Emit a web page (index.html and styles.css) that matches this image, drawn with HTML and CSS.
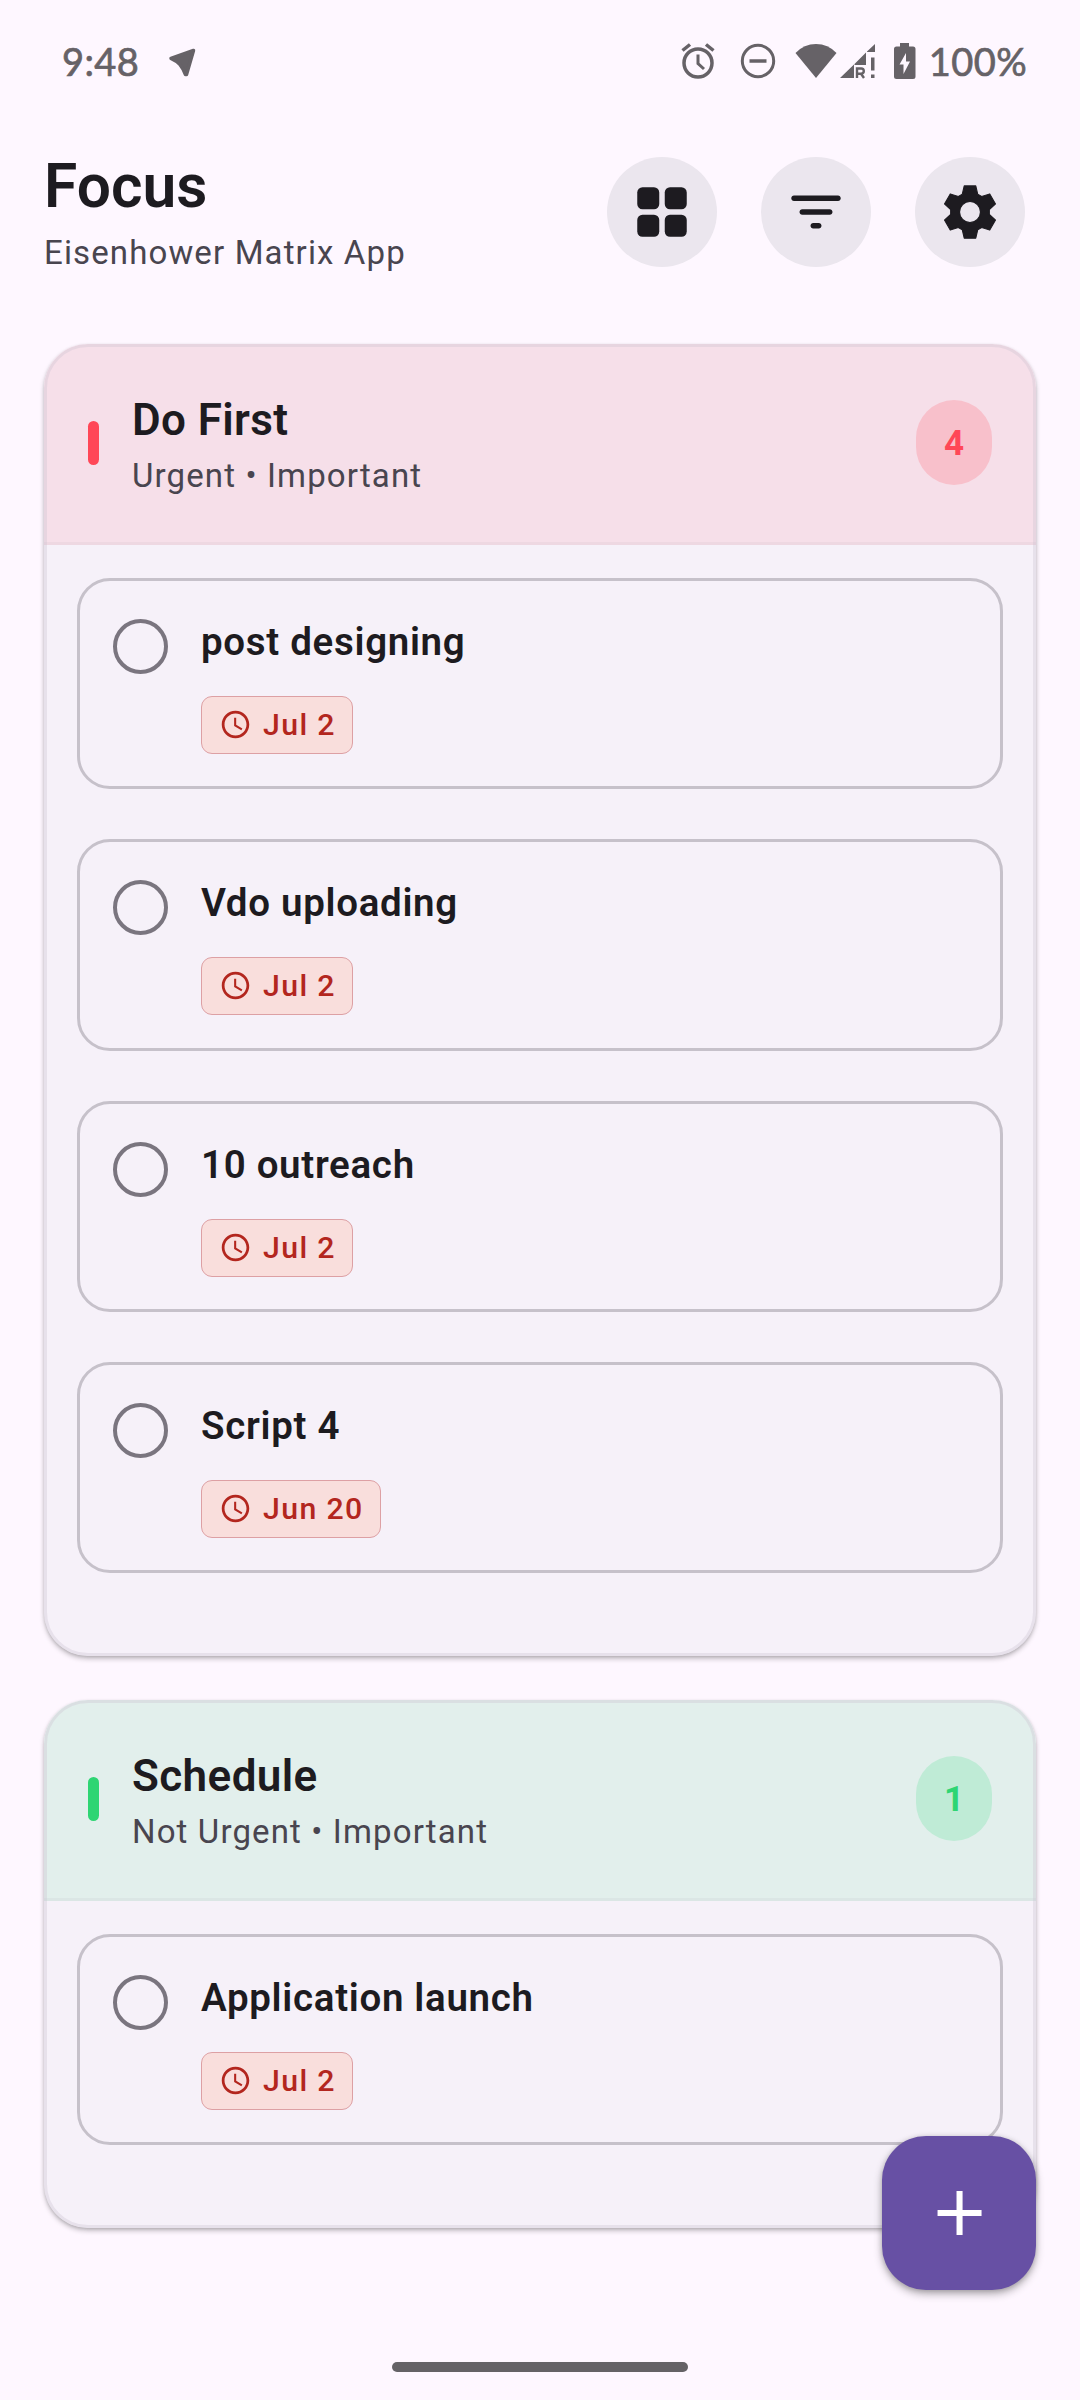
FILE: index.html
```html
<!DOCTYPE html>
<html lang="en">
<head>
<meta charset="utf-8">
<title>Focus</title>
<link rel="stylesheet" href="styles.css">
</head>
<body>
<svg class="defs" aria-hidden="true">
  <symbol id="clock" viewBox="0 0 24 24"><path d="M11.99 2C6.47 2 2 6.48 2 12s4.47 10 9.99 10C17.52 22 22 17.52 22 12S17.52 2 11.99 2zM12 20c-4.42 0-8-3.58-8-8s3.58-8 8-8 8 3.58 8 8-3.58 8-8 8zm.5-13H11v6l5.25 3.15.75-1.23-4.5-2.67z"/></symbol>
</svg>
<div class="screen">
  <div class="status">
    <span class="time">9:48</span>
    <svg class="send" viewBox="0 0 28 29"><path d="M25.500 2.500 L3 10.500 Q8.500 13 12 16.500 Q15 20 17.500 26.500 L18.500 26.500 Z" stroke="currentColor" stroke-width="3.500" stroke-linejoin="round"/></svg>
    <svg class="alarm outline" viewBox="0 0 34 36"><circle cx="17" cy="20" r="14" stroke-width="3.500"/><path d="M1.500 7.500 9 1.500M32.500 7.500 25 1.500" stroke-width="3.500"/><path d="M17 11.500V20.500L23 26" stroke-width="3"/></svg>
    <svg class="dnd outline" viewBox="0 0 36 36"><circle cx="18" cy="18" r="15.700" stroke-width="3"/><path d="M9.500 18H26.500" stroke-width="3.500"/></svg>
    <svg class="wifi" viewBox="0 0 42 36"><path d="M21 35 .5 10Q9 1 21 1T41.500 10Z"/></svg>
    <svg class="signal" viewBox="0 0 36 36"><path d="M0 35 14 21.500V35ZM14.500 21 26 9.500V22H14.500ZM27 8.500 35 1V9H27ZM31 14.500h3.500V27.500H31ZM31 31.500h3.500V35H31Z"/><path class="outline" d="M17 35V25.500h4.200a2.600 2.600 0 0 1 0 5.200H17m4 0 3 4.300" stroke-width="2.400"/></svg>
    <svg class="battery" viewBox="0 0 22 36"><path fill-rule="evenodd" d="M6 0h9v3.500h4Q21.500 3.500 21.500 6V33.500Q21.500 36 19 36H2.500Q0 36 0 33.500V6Q0 3.500 2.500 3.500H6ZM12 10 5.500 21.500H9.500V31L16 18.500H12Z"/></svg>
    <span class="pct">100%</span>
  </div>

  <header class="appbar">
    <div class="heading">
      <h1>Focus</h1>
      <p>Eisenhower Matrix App</p>
    </div>
    <div class="actions">
      <button class="round"><svg viewBox="0 0 24 24"><rect x="3" y="3" width="8" height="8" rx="1.900"/><rect x="13" y="3" width="8" height="8" rx="1.900"/><rect x="3" y="13" width="8" height="8" rx="1.900"/><rect x="13" y="13" width="8" height="8" rx="1.900"/></svg></button>
      <button class="round"><svg viewBox="0 0 24 24"><path d="M11 18h2c.55 0 1-.45 1-1s-.45-1-1-1h-2c-.55 0-1 .45-1 1s.45 1 1 1zM3 7c0 .55.45 1 1 1h16c.55 0 1-.45 1-1s-.45-1-1-1H4c-.55 0-1 .45-1 1zm4 6h10c.55 0 1-.45 1-1s-.45-1-1-1H7c-.55 0-1 .45-1 1s.45 1 1 1z"/></svg></button>
      <button class="round"><svg viewBox="-12 -12 24 24"><path fill-rule="evenodd" stroke="currentColor" stroke-width=".4" stroke-linejoin="round" d="M-2.800-6.500-2.100-9.500H2.100L2.800-6.500 4.230-5.670 7.180-6.570 9.280-2.930 7.030-.83V.83L9.280 2.930 7.180 6.570 4.230 5.670 2.800 6.500 2.100 9.500H-2.100L-2.800 6.500-4.230 5.670-7.180 6.570-9.280 2.930-7.030.83V-.83L-9.280-2.930-7.180-6.570-4.230-5.670ZM3.800 0A3.800 3.800 0 1 0-3.800 0A3.800 3.800 0 1 0 3.800 0Z"/></svg></button>
    </div>
  </header>

  <main class="board">
    <section class="quadrant urgent">
      <div class="qhead">
        <i class="bar"></i>
        <div class="qtext"><h2>Do First</h2><p>Urgent • Important</p></div>
        <span class="count">4</span>
      </div>
      <div class="tasks">
        <article class="task"><i class="check"></i><div><h3>post designing</h3><span class="due"><svg><use href="#clock"/></svg>Jul 2</span></div></article>
        <article class="task"><i class="check"></i><div><h3>Vdo uploading</h3><span class="due"><svg><use href="#clock"/></svg>Jul 2</span></div></article>
        <article class="task"><i class="check"></i><div><h3>10 outreach</h3><span class="due"><svg><use href="#clock"/></svg>Jul 2</span></div></article>
        <article class="task"><i class="check"></i><div><h3>Script 4</h3><span class="due"><svg><use href="#clock"/></svg>Jun 20</span></div></article>
      </div>
    </section>
    <section class="quadrant planned">
      <div class="qhead">
        <i class="bar"></i>
        <div class="qtext"><h2>Schedule</h2><p>Not Urgent • Important</p></div>
        <span class="count">1</span>
      </div>
      <div class="tasks">
        <article class="task"><i class="check"></i><div><h3>Application launch</h3><span class="due"><svg><use href="#clock"/></svg>Jul 2</span></div></article>
      </div>
    </section>
  </main>

  <button class="fab"><svg viewBox="0 0 24 24"><path d="M20.200 13.100h-6.900V20h-2.200v-6.900H4.200v-2.200h6.900V4h2.200v6.900h6.900z"/></svg></button>
  <div class="homebar"></div>
</div>
</body>
</html>
```
FILE: styles.css
```css
* { box-sizing: border-box; margin: 0; padding: 0; }
body { background: #fef7ff; font-family: Roboto, sans-serif; color: #1d1b20; }
button { border: 0; font: inherit; }
svg { display: block; fill: currentColor; flex: none; }
.outline { fill: none; stroke: currentColor; }
.defs { position: absolute; width: 0; height: 0; }

.screen { position: relative; width: 1080px; height: 2400px; overflow: hidden; display: flex; flex-direction: column; }

.status { height: 123px; padding: 0 53px 1px 62px; display: flex; align-items: center; color: #666267; font: 400 38px/46px Lato, sans-serif; -webkit-text-stroke: .7px currentColor; }
.time { letter-spacing: .4px; margin-top: -1px; }
.send { width: 28px; height: 29px; margin: 3px auto 0 29px; }
.alarm { width: 34px; height: 36px; }
.dnd { width: 36px; height: 36px; margin-left: 25px; }
.wifi { width: 42px; height: 36px; margin-left: 19px; }
.signal { width: 36px; height: 36px; margin-left: 3px; }
.battery { width: 22px; height: 36px; margin-left: 18px; }
.pct { margin: -1px 0 0 12.5px; letter-spacing: .4px; }

.appbar { height: 221px; padding: 25px 55px 0 44px; display: flex; justify-content: space-between; }
.heading h1 { font-size: 60.5px; line-height: 77px; font-weight: 600; }
.heading p { font-size: 33px; line-height: 44px; letter-spacing: 1.13px; margin-top: 6px; color: #49454f; }
.actions { display: flex; gap: 44px; padding-top: 9px; }
.round { width: 110px; height: 110px; border-radius: 50%; background: #ebe6ee; color: #1d1b20; display: grid; place-items: center; }
.round svg { width: 66px; height: 66px; }

.board { padding: 0 44px; display: flex; flex-direction: column; gap: 44px; }
.quadrant { position: relative; border-radius: 44px; background: #f6f1f9; overflow: hidden; box-shadow: 0 3px 5px rgba(0,0,0,.22), 0 1px 3px rgba(0,0,0,.12); }
.quadrant::after { content: ""; position: absolute; inset: 0; border: 3px solid rgba(202,196,208,.35); border-radius: inherit; pointer-events: none; }
.urgent { --accent: #ff4757; --tint: #f6dfe9; --edge: #eed8e2; --pill: #f8c0cb; }
.planned { --accent: #2ed573; --tint: #e2efec; --edge: #dbe6e5; --pill: #bfebd6; }
.qhead { height: 201px; padding: 0 44px 1px; display: flex; align-items: center; background: var(--tint); border-bottom: 3px solid var(--edge); }
.bar { width: 11px; height: 44px; border-radius: 5.5px; background: var(--accent); margin-right: 33px; }
.qtext { flex: 1; padding-top: 3px; }
.qtext h2 { font-size: 44px; line-height: 58px; font-weight: 600; letter-spacing: .4px; }
.qtext p { font-size: 33px; line-height: 44px; letter-spacing: 1.13px; margin-top: 5px; color: #49454f; }
.count { width: 76px; height: 85px; padding-top: 1px; border-radius: 44px; display: grid; place-items: center; background: var(--pill); color: var(--accent); font-size: 35px; font-weight: 700; }

.tasks { padding: 33px 33px 83px; display: flex; flex-direction: column; gap: 50px; }
.task { height: 211.25px; border: 3px solid #c6c1ca; border-radius: 33px; padding: 33px 33px 0; display: flex; gap: 33px; }
.check { width: 55px; height: 55px; margin-top: 5px; border: 4px solid #7a757f; border-radius: 50%; }
.task h3 { font-size: 38.5px; line-height: 55px; font-weight: 600; letter-spacing: .69px; }
.due { display: inline-flex; align-items: center; height: 58px; margin-top: 27px; padding: 0 16px 1px 17px; border: 1px solid #dda0a4; border-radius: 11px; background: #f9dedc; color: #b3261e; font-size: 30.25px; font-weight: 500; letter-spacing: 1.375px; }
.due svg { width: 33px; height: 33px; margin-right: 11px; }

.fab { position: absolute; left: 882px; top: 2136px; width: 154px; height: 154px; border-radius: 44px; background: #6750a4; color: #fff; display: grid; place-items: center; box-shadow: 0 4px 8px rgba(0,0,0,.3), 0 1px 5px rgba(0,0,0,.15); }
.fab svg { width: 66px; height: 66px; }
.homebar { position: absolute; left: 392px; top: 2362px; width: 296px; height: 10px; border-radius: 5px; background: #656266; }
```
